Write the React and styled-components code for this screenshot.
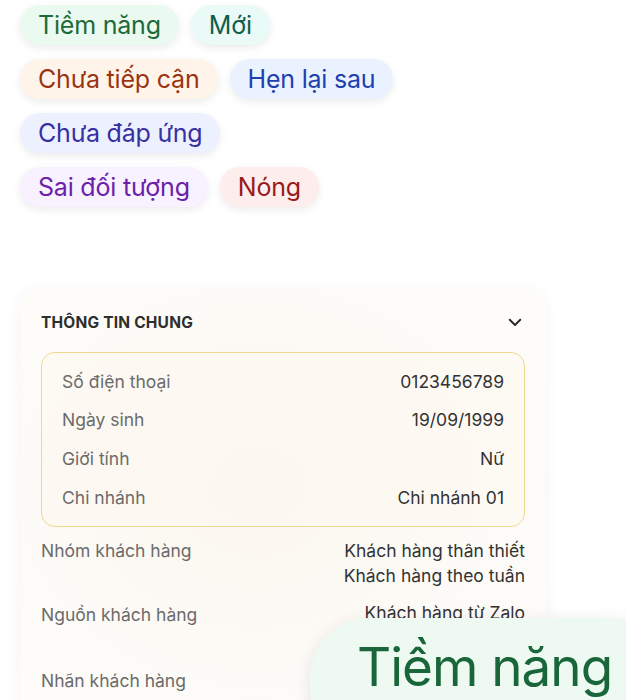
import React from "react";
import styled, { createGlobalStyle } from "styled-components";

const GlobalStyle = createGlobalStyle`
  html, body {
    margin: 0;
    padding: 0;
    background: #ffffff;
    font-family: Inter, "Noto Sans", sans-serif;
    overflow: hidden;
  }
`;

const TAGS = [
  [
    { label: "Tiềm năng", bg: "#ebfaf0", color: "#1d6a3a" },
    { label: "Mới", bg: "#eafaf6", color: "#115e4c" },
  ],
  [
    { label: "Chưa tiếp cận", bg: "#fff4ea", color: "#9a3412" },
    { label: "Hẹn lại sau", bg: "#ebf2ff", color: "#1e40af" },
  ],
  [{ label: "Chưa đáp ứng", bg: "#edf0fe", color: "#3730a3" }],
  [
    { label: "Sai đối tượng", bg: "#f8f1ff", color: "#6b21a8" },
    { label: "Nóng", bg: "#fdeded", color: "#991b1b" },
  ],
];

const BOXED = [
  ["Số điện thoại", "0123456789"],
  ["Ngày sinh", "19/09/1999"],
  ["Giới tính", "Nữ"],
  ["Chi nhánh", "Chi nhánh 01"],
];

function App() {
  return (
    <Page>
      <GlobalStyle />
      <TagList>
        {TAGS.map((row, i) => (
          <TagRow key={i}>
            {row.map(t => (
              <Tag key={t.label} $bg={t.bg} $color={t.color}>
                {t.label}
              </Tag>
            ))}
          </TagRow>
        ))}
      </TagList>

      <Card>
        <CardHeader>
          <CardTitle>THÔNG TIN CHUNG</CardTitle>
          <svg width="18" height="18" viewBox="0 0 24 24" fill="none" stroke="#2b2b2b" strokeWidth="2.6" strokeLinecap="round" strokeLinejoin="round">
            <path d="M5 9l7 7 7-7" />
          </svg>
        </CardHeader>
        <InfoBox>
          {BOXED.map(([k, v]) => (
            <InfoRow key={k}>
              <Label>{k}</Label>
              <Value>{v}</Value>
            </InfoRow>
          ))}
        </InfoBox>
        <ExtraList>
          <ExtraRow>
            <Label>Nhóm khách hàng</Label>
            <ValueStack>
              <Value>Khách hàng thân thiết</Value>
              <Value>Khách hàng theo tuần</Value>
            </ValueStack>
          </ExtraRow>
          <ExtraRow>
            <Label>Nguồn khách hàng</Label>
            <Value $lift>Khách hàng từ Zalo</Value>
          </ExtraRow>
          <ExtraRow $last>
            <Label>Nhãn khách hàng</Label>
          </ExtraRow>
        </ExtraList>
      </Card>

      <DragTag>Tiềm năng</DragTag>
    </Page>
  );
}

const Page = styled.div`
  position: relative;
  width: 626px;
  height: 700px;
  overflow: hidden;
  padding: 5px 20px 0;
  box-sizing: border-box;
`;

const TagList = styled.div`
  display: flex;
  flex-direction: column;
  gap: 14px;
`;

const TagRow = styled.div`
  display: flex;
  gap: 12px;
`;

const Tag = styled.div`
  height: 40px;
  display: flex;
  align-items: center;
  padding: 0 18px;
  border-radius: 20px;
  background: ${p => p.$bg};
  color: ${p => p.$color};
  font-family: Inter, sans-serif;
  font-size: 25px;
  letter-spacing: -0.2px;
  box-shadow: 0 3px 8px rgba(0, 0, 0, 0.08);
`;

const Card = styled.div`
  margin-top: 81px;
  width: 526px;
  height: 440px;
  border-radius: 20px;
  padding: 22px 21px 0;
  box-sizing: border-box;
  background: radial-gradient(ellipse at 45% 45%, #fbf6ee 0%, #fdfbf7 55%, #fefdfb 100%);
  box-shadow: 0 2px 14px rgba(0, 0, 0, 0.05);
`;

const CardHeader = styled.div`
  display: flex;
  align-items: center;
  justify-content: space-between;
  padding-right: 1px;
  height: 24px;
`;

const CardTitle = styled.div`
  font-family: Inter, sans-serif;
  font-weight: 700;
  font-size: 15.5px;
  color: #2e2e2e;
  letter-spacing: 0.2px;
`;

const InfoBox = styled.div`
  margin-top: 18px;
  border: 1px solid #f1d88f;
  border-radius: 14px;
  padding: 9px 20px 10px;
  display: flex;
  flex-direction: column;
  background: rgba(253, 249, 240, 0.6);
`;

const InfoRow = styled.div`
  display: flex;
  justify-content: space-between;
  align-items: center;
  height: 38.6px;
`;

const Label = styled.div`
  font-family: Inter, sans-serif;
  font-size: 17.5px;
  color: #6b6b6b;
`;

const Value = styled.div`
  font-family: Inter, sans-serif;
  font-size: 17.5px;
  color: #333333;
  text-align: right;
  margin-top: ${p => (p.$lift ? "-2px" : "0")};
`;

const ExtraList = styled.div`
  display: flex;
  flex-direction: column;
  margin-top: 13px;
`;

const ExtraRow = styled.div`
  display: flex;
  justify-content: space-between;
  align-items: flex-start;
  margin-bottom: ${p => (p.$last ? "0" : "18px")};
  margin-top: ${p => (p.$last ? "27px" : "0")};
`;

const ValueStack = styled.div`
  display: flex;
  flex-direction: column;
  gap: 4px;
`;

const DragTag = styled.div`
  position: absolute;
  left: 310px;
  top: 618px;
  width: 360px;
  height: 130px;
  border-radius: 60px;
  background: #eefaf1;
  color: #19663a;
  font-family: Inter, sans-serif;
  font-size: 53px;
  letter-spacing: -1px;
  white-space: nowrap;
  padding: 17px 0 0 47px;
  box-sizing: border-box;
  box-shadow: 0 4px 18px rgba(0, 0, 0, 0.1);
`;

export default App;
